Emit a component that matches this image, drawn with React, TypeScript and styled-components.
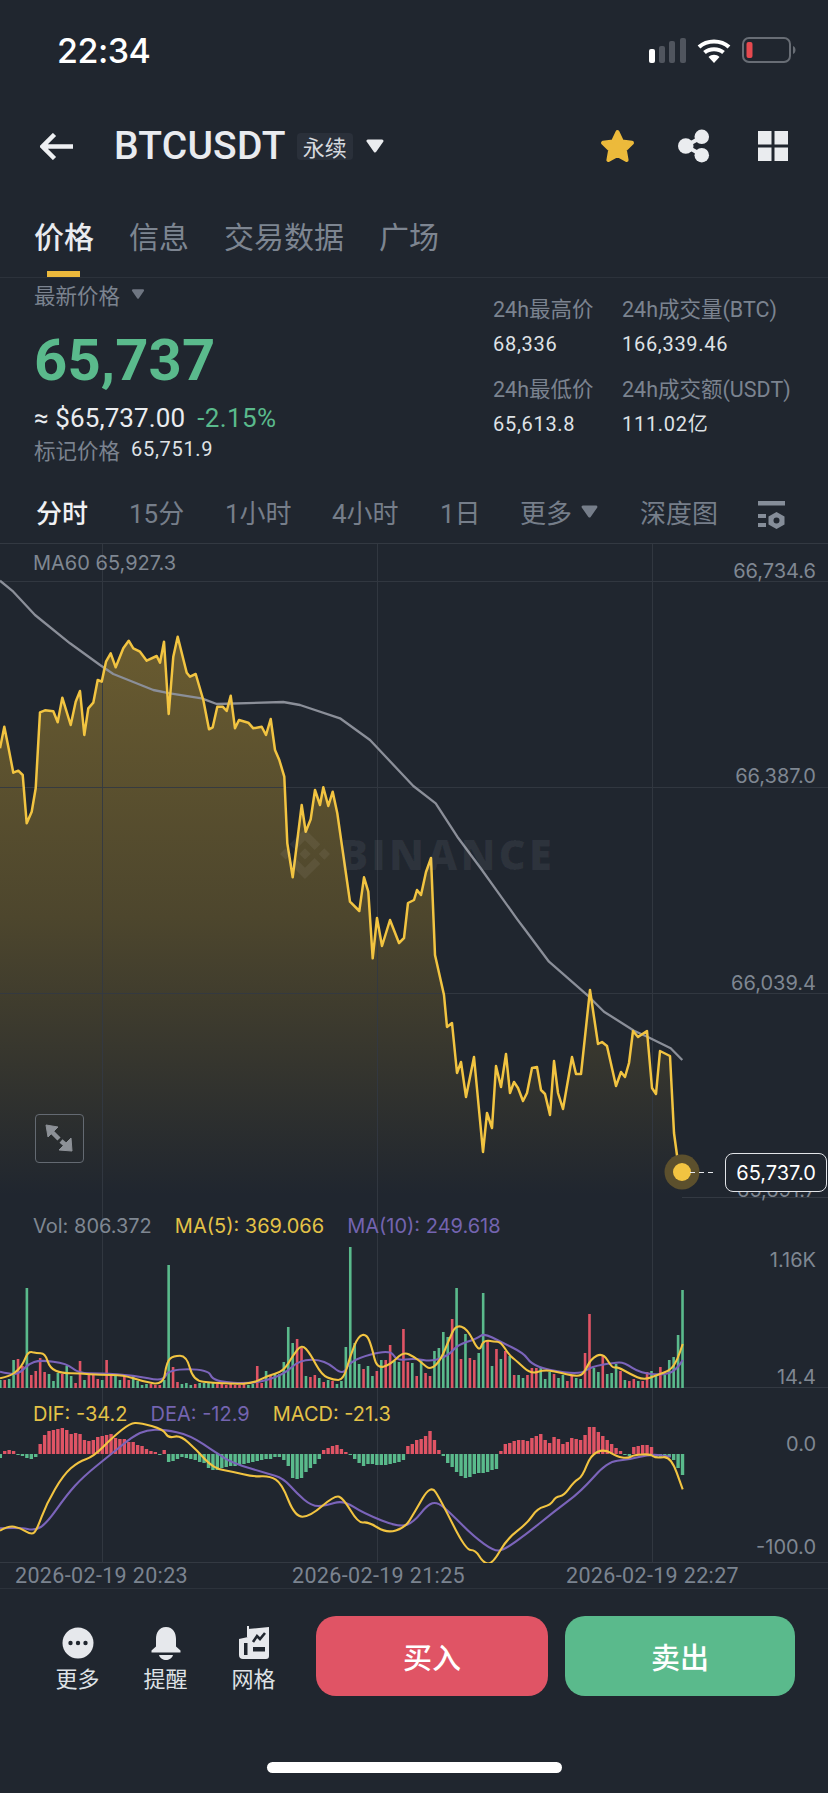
import React from 'react';
import styled, { createGlobalStyle } from 'styled-components';
import { SiBinance } from 'react-icons/si';

const BG = '#20262f';
const GRID = '#333942';
const GREEN = '#5aba8c';
const RED = '#e05465';
const YELLOW = '#f2c441';
const PURPLE = '#7b64ba';
const CJK = `Roboto, "Noto Sans CJK SC", sans-serif`;
const SANS = `Inter, "Liberation Sans", sans-serif`;

type Pt = [number, number];

// traced from crops at 3x, so each run is converted back to page pixels
const crop = (pts: number[][], ox: number, oy: number): Pt[] =>
  pts.map(([x, y]) => [x / 3 + ox, y / 3 + oy] as Pt);

const sharp = (pts: Pt[]) => 'M' + pts.map(([x, y]) => `${x.toFixed(1)} ${y.toFixed(1)}`).join('L');

const smooth = (pts: Pt[]) => {
  let d = `M${pts[0][0].toFixed(1)} ${pts[0][1].toFixed(1)}`;
  for (let i = 1; i < pts.length - 1; i++) {
    const mx = (pts[i][0] + pts[i + 1][0]) / 2;
    const my = (pts[i][1] + pts[i + 1][1]) / 2;
    d += `Q${pts[i][0].toFixed(1)} ${pts[i][1].toFixed(1)} ${mx.toFixed(1)} ${my.toFixed(1)}`;
  }
  const last = pts[pts.length - 1];
  return d + `L${last[0].toFixed(1)} ${last[1].toFixed(1)}`;
};

const PRICE: Pt[] = [
  ...crop(
    [[0,595],[13,530],[25,590],[40,668],[55,662],[68,675],[80,820],[95,785],[107,715],[120,487],[135,481],[160,484],[173,517],[187,443],[212,525],[227,455],[240,423],[253,555],[265,475],[280,458],[293,390],[305,395],[318,335],[332,310],[347,352],[370,295],[386,272],[400,295],[420,305],[440,332],[470,318],[480,338],[492,275],[506,492],[520,320],[533,260],[560,368],[570,380],[587,372],[610,450],[627,538],[638,532],[652,470],[668,470],[680,483],[692,437],[705,535],[717,510],[745,518],[760,535],[785,530],[798,555],[812,507],[825,600],[838,630],[853,680],[862,880],[878,982],[905,765],[917,845],[932,808],[945,720],[960,765],[970,712],[985,768],[998,725],[1012,790],[1050,1055],[1078,1083],[1092,982],[1105,1025],[1118,1225]],
    0,
    550
  ),
  [377,918],[382,946],[390,920],[399,943],[404,938],[408,903],[414,900],[417,890],[421,895],[426,872],[431,858],[435,955],[444,995],[447,1027],[452,1023],[457,1073],[461,1062],[466,1097],[474,1057],[483,1152],[487,1113],[492,1128],[496,1066],[501,1087],[506,1054],[510,1093],[514,1082],[518,1088],[523,1101],[527,1093],[532,1068],[537,1067],[541,1090],[545,1094],[550,1115],[554,1061],[558,1093],[563,1109],[572,1057],[576,1074],[581,1074],[590,990],[598,1044],[602,1042],[607,1046],[616,1086],[621,1072],[625,1077],[629,1063],[633,1031],[638,1037],[647,1031],[652,1088],[656,1094],[660,1051],[670,1056],[674,1133],[679,1170],[682,1172],
];

const MA60: Pt[] = [
  ...crop([[0,92],[40,125],[105,195],[210,280],[300,345],[340,372],[460,420],[510,430],[605,445],[650,462],[850,456],[900,465],[1020,505],[1110,570],[1240,708]], 0, 550),
  ...crop([[65,760],[130,860],[200,955],[310,1108]], 414, 550),
  ...crop([[330,85],[405,185],[525,290],[570,335],[660,392],[700,410],[770,445],[805,480]], 414, 900),
];

// positive = green, negative = red
const VOLUME = [
  8,-8,9,28,-29,-22,100,-13,-17,-30,-16,14,7,15,-14,22,12,-5,-27,8,-14,-15,-9,8,-28,-14,12,8,-13,-8,13,7,3,4,-4,-3,-3,8,123,-21,-6,4,5,3,-4,5,5,5,6,-4,-4,-3,-4,-3,-3,-4,3,4,-22,-5,17,-12,14,14,26,61,45,-49,-40,12,-11,-13,10,-6,8,-7,4,7,41,141,45,24,-19,22,12,-17,28,-28,-43,27,26,-59,-26,25,-12,28,-15,-12,37,40,56,51,-69,100,-29,54,-30,-28,35,95,-48,22,-39,29,-37,32,-13,13,10,-13,-20,-20,20,9,16,-14,10,13,-7,-12,10,9,-35,-74,20,16,-33,14,15,24,-17,8,-7,-9,7,-7,-16,17,13,-21,13,28,31,53,98,
];

// positive = red (above zero), negative = green
const MACD = [
  -4,3,4,3,-1,-2,-4,-5,-3,10,19,23,24,25,26,24,20,21,20,14,13,14,17,18,19,20,16,15,15,12,12,9,8,5,3,2,-1,4,-8,-7,-5,-3,-4,-5,-6,-8,-9,-14,-16,-16,-14,-13,-12,-12,-11,-10,-9,-8,-7,-6,-5,-5,-3,-3,-6,-12,-24,-25,-24,-18,-14,-10,-5,4,6,8,9,5,2,-1,-5,-9,-12,-10,-10,-11,-11,-11,-10,-9,-8,-6,8,10,14,15,18,23,14,4,-2,-9,-13,-18,-22,-24,-23,-20,-19,-19,-18,-16,-15,3,10,11,13,14,14,13,16,18,20,14,11,17,15,10,12,16,15,14,19,27,27,22,18,14,10,6,3,-1,-2,7,8,9,9,7,-3,-3,-3,-3,-6,-14,-21,
];

const barX = (i: number) => i * 4.43 + 0.3;

const VOL_MA5: Pt[] = [
  ...crop([[0,565],[30,558],[55,540],[70,520],[85,483],[110,490],[135,490],[150,535],[185,550],[240,550],[300,555],[370,555],[430,575],[490,585],[500,515],[520,497],[560,497],[580,572],[640,578],[700,582],[760,580],[800,558],[850,545],[880,495],[905,463],[930,490],[965,555],[1000,570],[1030,570],[1050,500],[1075,437],[1100,433],[1115,470],[1130,535],[1170,525],[1210,485],[1242,500]], 0, 1190),
  ...crop([[25,520],[50,540],[80,510],[105,450],[125,405],[160,415],[195,488],[208,450],[240,455],[260,455],[285,495],[310,515],[350,552],[390,540],[425,545],[490,560],[510,550],[530,507],[567,488],[595,535],[610,530],[650,553],[690,570],[730,555],[770,540],[790,510],[806,462]], 414, 1190),
];

const VOL_MA10: Pt[] = [
  ...crop([[0,545],[40,555],[65,545],[85,522],[120,510],[200,520],[235,550],[300,550],[400,555],[490,575],[505,538],[625,538],[640,575],[760,582],[850,555],[900,508],[975,510],[1030,558],[1050,510],[1170,478],[1190,512],[1242,505]], 0, 1190),
  ...crop([[55,515],[105,495],[130,465],[190,445],[210,430],[260,455],[330,490],[350,520],[400,540],[500,553],[530,530],[600,518],[630,517],[680,550],[760,555],[790,535],[806,510]], 414, 1190),
];

const DIF: Pt[] = [
  ...crop([[0,452],[25,437],[60,443],[95,465],[110,450],[140,370],[190,285],[235,245],[280,230],[340,170],[390,130],[420,128],[490,148],[505,175],[540,165],[590,210],[640,265],[700,275],[760,290],[810,288],[845,310],[885,410],[930,410],[1005,345],[1030,355],[1075,430],[1105,425],[1160,460],[1215,443],[1242,400]], 0, 1380),
  ...crop([[50,313],[80,360],[155,510],[185,510],[207,548],[235,553],[280,475],[340,430],[370,385],[410,375],[425,350],[450,347],[480,305],[505,290],[530,225],[570,207],[610,230],[640,235],[660,225],[710,222],[725,235],[770,228],[806,328]], 414, 1380),
];

const DEA: Pt[] = [
  ...crop([[0,445],[60,442],[105,452],[140,430],[200,345],[250,290],[330,225],[400,168],[440,150],[490,148],[570,165],[650,220],[700,250],[800,280],[850,295],[890,340],[935,378],[975,378],[1030,360],[1090,400],[1200,443],[1242,425]], 0, 1380),
  ...crop([[40,375],[70,365],[110,400],[180,470],[240,513],[270,510],[340,460],[420,395],[500,335],[580,245],[640,240],[710,222],[770,230]], 414, 1380),
];

const GlobalStyle = createGlobalStyle`
  html, body {
    margin: 0;
    padding: 0;
    background: ${BG};
  }
`;

const Page = styled.div`
  width: 828px;
  height: 1793px;
  background: ${BG};
  color: #eaecef;
  font-family: ${CJK};
  overflow: hidden;
  display: flex;
  flex-direction: column;
`;

const StatusBar = styled.div`
  height: 100px;
  display: flex;
  align-items: center;
  justify-content: space-between;
  padding: 0 32px 0 57px;
  box-sizing: border-box;
`;

const Clock = styled.div`
  font-family: ${SANS};
  font-size: 34px;
  font-weight: 500;
  color: #fff;
  letter-spacing: -0.5px;
`;

const StatusIcons = styled.div`
  display: flex;
  align-items: center;
  gap: 11px;
`;

const Header = styled.div`
  height: 92px;
  display: flex;
  align-items: center;
  padding: 0 40px;
  box-sizing: border-box;
`;

const Symbol = styled.div`
  font-size: 39px;
  font-weight: 500;
  margin-left: 41px;
  color: #e9ebef;
  letter-spacing: 0.2px;
`;

const Badge = styled.div`
  width: 56px;
  height: 27px;
  margin-left: 11px;
  border-radius: 4px;
  background: #2a303a;
  color: #d6d9de;
  font-size: 22px;
  display: flex;
  align-items: center;
  justify-content: center;
`;

const CaretSlot = styled.span`
  margin-left: 13px;
`;

const HeaderActions = styled.div`
  margin-left: auto;
  display: flex;
  align-items: center;
  gap: 43px;
  & > svg:last-child {
    margin-left: 5px;
  }
`;

const TabBar = styled.div`
  height: 86px;
  display: flex;
  padding-left: 34px;
  gap: 35px;
  border-bottom: 1px solid #2c323b;
  box-sizing: border-box;
`;

const Tab = styled.div<{ $active?: boolean }>`
  position: relative;
  font-size: 30px;
  line-height: 30px;
  padding-top: 31px;
  font-weight: ${(p) => (p.$active ? 500 : 400)};
  color: ${(p) => (p.$active ? '#e9ebef' : '#7d8591')};
`;

const TabMark = styled.div`
  position: absolute;
  left: 13px;
  bottom: 0;
  width: 33px;
  height: 6px;
  background: #edb93c;
`;

const Stats = styled.div`
  height: 202px;
  display: flex;
  padding-left: 34px;
  box-sizing: border-box;
`;

const PriceColumn = styled.div`
  width: 459px;
`;

const Muted = styled.span`
  color: #7b838f;
  font-size: 21.5px;
`;

const LastPriceLabel = styled.div`
  display: flex;
  align-items: center;
  gap: 11px;
  height: 32px;
`;

const BigPrice = styled.div`
  font-size: 58px;
  font-weight: 700;
  line-height: 60px;
  margin-top: 20px;
  color: ${GREEN};
  letter-spacing: 0.1px;
`;

const FiatRow = styled.div`
  display: flex;
  align-items: baseline;
  gap: 12px;
  margin-top: 12px;
  font-size: 26px;
  line-height: 32px;
  letter-spacing: 0.1px;
  color: #eaecef;
`;

const Change = styled.span`
  color: ${GREEN};
  letter-spacing: 0.4px;
`;

const MarkRow = styled.div`
  display: flex;
  align-items: center;
  gap: 11px;
  height: 30px;
`;

const SmallValue = styled.span`
  font-size: 20px;
  color: #dfe2e6;
  letter-spacing: 0.7px;
`;

const MarketGrid = styled.div`
  display: grid;
  grid-template-columns: 129px auto;
  grid-template-rows: 35px 45px 35px 45px;
  padding-top: 14px;
  align-content: start;
`;

const MarketCell = styled.div`
  line-height: 35px;
  white-space: nowrap;
`;

const IntervalBar = styled.div`
  height: 64px;
  display: flex;
  align-items: center;
  padding-left: 36px;
  position: relative;
  border-bottom: 1px solid ${GRID};
  box-sizing: border-box;
`;

const Interval = styled.div<{ $active?: boolean; $w: number }>`
  width: ${(p) => p.$w}px;
  flex: none;
  font-size: 26px;
  display: flex;
  align-items: center;
  gap: 9px;
  font-weight: ${(p) => (p.$active ? 500 : 400)};
  color: ${(p) => (p.$active ? '#f0f1f3' : '#767e8a')};
`;

const ChartPanel = styled.div<{ $h: number }>`
  position: relative;
  height: ${(p) => p.$h}px;
  border-bottom: 1px solid ${GRID};
  box-sizing: border-box;
  font-family: ${SANS};
  font-size: 20px;
  svg.plot {
    display: block;
    position: absolute;
    inset: 0;
  }
`;

const Legend = styled.div<{ $top: number }>`
  position: absolute;
  left: 33px;
  top: ${(p) => p.$top}px;
  display: flex;
  gap: 23px;
  line-height: 22px;
  white-space: nowrap;
`;

const LegendItem = styled.span<{ $color: string }>`
  color: ${(p) => p.$color};
`;

const AxisLabel = styled.div<{ $top: number }>`
  position: absolute;
  right: 12px;
  top: ${(p) => p.$top}px;
  line-height: 22px;
  color: #7f8792;
`;

const Watermark = styled.div`
  position: absolute;
  left: 280px;
  top: 281px;
  display: flex;
  align-items: center;
  gap: 10px;
  font-family: "Open Sans", ${SANS};
  font-size: 42px;
  font-weight: 800;
  letter-spacing: 3px;
  color: rgba(255, 255, 255, 0.06);
`;

const ExpandButton = styled.div`
  position: absolute;
  left: 35px;
  top: 570px;
  width: 49px;
  height: 49px;
  box-sizing: border-box;
  border: 1.5px solid #646a72;
  border-radius: 4px;
`;

const PriceTag = styled.div`
  position: absolute;
  left: 725px;
  top: 609px;
  width: 102px;
  height: 39px;
  box-sizing: border-box;
  border: 1.5px solid #e2e4e8;
  border-radius: 8px;
  background: ${BG};
  color: #fff;
  font-size: 20px;
  display: flex;
  align-items: center;
  justify-content: center;
`;

const TimeAxis = styled.div`
  height: 26px;
  position: relative;
  border-bottom: 1px solid #2c323b;
  box-sizing: border-box;
  font-family: ${CJK};
  font-size: 21.5px;
  color: #7b838f;
  display: flex;
  align-items: center;
  padding-left: 15px;
`;

const TimeLabel = styled.span<{ $w: number }>`
  width: ${(p) => p.$w}px;
  flex: none;
  letter-spacing: 0.35px;
`;

const BottomBar = styled.div`
  height: 109px;
  padding-top: 27px;
  display: flex;
  box-sizing: border-box;
`;

const ToolGroup = styled.div`
  width: 316px;
  display: flex;
  padding-left: 34px;
  padding-top: 10px;
  box-sizing: border-box;
`;

const Tool = styled.div`
  width: 89px;
  margin-left: -1px;
  display: flex;
  flex-direction: column;
  align-items: center;
  gap: 8px;
  font-size: 22px;
  line-height: 24px;
  white-space: nowrap;
  color: #dfe2e6;
  svg {
    display: block;
  }
`;

const TradeButton = styled.div<{ $color: string; $w: number }>`
  width: ${(p) => p.$w}px;
  height: 80px;
  margin-right: 17px;
  background: ${(p) => p.$color};
  border-radius: 20px;
  color: #fff;
  font-size: 29px;
  font-weight: 500;
  display: flex;
  align-items: center;
  justify-content: center;
`;

const HomeRow = styled.div`
  flex: 1;
  display: flex;
  justify-content: center;
  padding-top: 64px;
  box-sizing: border-box;
`;

const HomeIndicator = styled.div`
  width: 295px;
  height: 11px;
  border-radius: 6px;
  background: #fff;
`;

const Caret: React.FC<{ color: string; w: number; h: number }> = ({ color, w, h }) => (
  <svg width={w} height={h} viewBox="0 0 18 14" style={{ display: 'block', flex: 'none' }}>
    <path d="M2 2H16L9 12Z" fill={color} stroke={color} strokeWidth="3" strokeLinejoin="round" />
  </svg>
);

const SignalIcon = () => (
  <svg width="37" height="25" viewBox="0 0 37 25">
    <rect x="0" y="11" width="6" height="14" rx="2" fill="#fff" />
    <rect x="10" y="8" width="6" height="17" rx="2" fill="#50555e" />
    <rect x="20" y="3" width="6" height="22" rx="2" fill="#50555e" />
    <rect x="31" y="0" width="6" height="25" rx="2" fill="#50555e" />
  </svg>
);

const WifiIcon = () => (
  <svg width="34" height="25" viewBox="0 0 34 25" fill="none" stroke="#fff" strokeLinecap="butt">
    <path d="M2 9C10 1.5 24 1.5 32 9" strokeWidth="4" />
    <path d="M7.5 14.5C12.5 10 21.5 10 26.5 14.5" strokeWidth="4" />
    <path d="M17 25L11.5 19C14.5 16 19.5 16 22.5 19Z" fill="#fff" stroke="none" />
  </svg>
);

const BatteryIcon = () => (
  <svg width="54" height="26" viewBox="0 0 54 26">
    <rect x="1" y="1" width="47" height="24" rx="6" fill="none" stroke="#686d75" strokeWidth="2" />
    <rect x="4.5" y="5" width="6" height="16" rx="2" fill="#e5494f" />
    <path d="M51 9C53 10 53.5 11.5 53.5 13S53 16 51 17Z" fill="#686d75" />
  </svg>
);

const BackIcon = () => (
  <svg width="33" height="27" viewBox="0 0 33 27" fill="none" stroke="#eef0f3" strokeWidth="4.5">
    <path d="M33 13.5H3M14.5 1.5L2.5 13.5L14.5 25.5" />
  </svg>
);

const StarIcon = () => (
  <svg width="35" height="34" viewBox="0 0 35 34">
    <path
      d="M17.5 3L22 12.5L32 13.8L24.8 20.8L26.6 31L17.5 26L8.4 31L10.2 20.8L3 13.8L13 12.5Z"
      fill="#ecba3b"
      stroke="#ecba3b"
      strokeWidth="4"
      strokeLinejoin="round"
    />
  </svg>
);

const ShareIcon = () => (
  <svg width="32" height="34" viewBox="0 0 33 34" fill="#eaecef">
    <path d="M24 8L8 17L24 26" fill="none" stroke="#eaecef" strokeWidth="4" />
    <circle cx="24.5" cy="7.5" r="7.5" />
    <circle cx="8" cy="17" r="8" />
    <circle cx="24.5" cy="26.5" r="7.5" />
  </svg>
);

const GridIcon = () => (
  <svg width="30" height="30" viewBox="0 0 30 30" fill="#eaecef">
    <rect x="0" y="0" width="13.5" height="13.5" />
    <rect x="16.5" y="0" width="13.5" height="13.5" />
    <rect x="0" y="16.5" width="13.5" height="13.5" />
    <rect x="16.5" y="16.5" width="13.5" height="13.5" />
  </svg>
);

const DepthSettingsIcon = () => (
  <svg width="28" height="28" viewBox="0 0 28 28" fill="#858d99" style={{ position: 'absolute', left: 758, top: 21 }}>
    <rect x="0" y="0" width="27" height="4.5" />
    <rect x="0" y="13" width="8" height="4" />
    <rect x="0" y="22" width="8" height="4" />
    <path
      fillRule="evenodd"
      d="M18.5 11L26.5 15.5V23.5L18.5 28L10.5 23.5V15.5ZM18.5 16.5A3 3 0 1 0 18.5 22.5A3 3 0 1 0 18.5 16.5Z"
    />
  </svg>
);

const ExpandIcon = () => (
  <svg width="46" height="46" viewBox="0 0 46 46" fill="#8d9197" stroke="#8d9197">
    <path d="M10 10L22 12L12 22Z" strokeWidth="1" />
    <path d="M14 15L23 24" strokeWidth="4.5" fill="none" />
    <path d="M36 36L23 35L35 23Z" strokeWidth="1" />
    <path d="M25 26L32 32" strokeWidth="4.5" fill="none" />
  </svg>
);

const MoreIcon = () => (
  <svg width="32" height="34" viewBox="0 0 32 34">
    <circle cx="16" cy="17" r="15.5" fill="#e6e8ec" />
    <circle cx="8.5" cy="17" r="2.2" fill="#20262f" />
    <circle cx="16" cy="17" r="2.2" fill="#20262f" />
    <circle cx="23.5" cy="17" r="2.2" fill="#20262f" />
  </svg>
);

const BellIcon = () => (
  <svg width="32" height="34" viewBox="0 0 32 34" fill="#e6e8ec">
    <path d="M16 1C23 1 26 7 26 13V20.5L30.5 24.5V26.5H1.5V24.5L6 20.5V13C6 7 9 1 16 1Z" />
    <path d="M9 29H23C22 32.5 19 34 16 34S10 32.5 9 29Z" />
  </svg>
);

const BotIcon = () => (
  <svg width="32" height="34" viewBox="0 0 32 34">
    <path d="M10 3L31 1V30C31 32 30 33 28 33H5C2.5 33 1 31.5 1 29V13L10 11Z" fill="#e6e8ec" />
    <path d="M11 0L9 0V11L11 11Z" fill="#e6e8ec" />
    <path d="M15 16L19 10L22 13L27 7" fill="none" stroke="#20262f" strokeWidth="2.6" />
    <rect x="15" y="21" width="12" height="4.5" fill="#20262f" />
    <rect x="6" y="17" width="3.5" height="12" fill="#20262f" />
  </svg>
);

const GridLines: React.FC<{ y0: number; y1: number; rows?: number[] }> = ({ y0, y1, rows = [] }) => (
  <g stroke={GRID} strokeWidth="1" opacity="0.9">
    {[102.5, 377.5, 652.5].map((x) => (
      <line key={x} x1={x} x2={x} y1={y0} y2={y1} />
    ))}
    {rows.map((y) => (
      <line key={y} x1="0" x2="828" y1={y} y2={y} />
    ))}
  </g>
);

const MainChart = () => {
  const line = sharp(PRICE);
  return (
    <ChartPanel $h={654}>
      <svg className="plot" width="828" height="654" viewBox="0 544 828 654">
        <defs>
          <linearGradient id="area" gradientUnits="userSpaceOnUse" x1="0" x2="0" y1="640" y2="1195">
            <stop offset="0" stopColor="#695b30" />
            <stop offset="0.5" stopColor="#4d462d" />
            <stop offset="1" stopColor={BG} />
          </linearGradient>
        </defs>
        <path d={`${line}L682 1198L0 1198Z`} fill="url(#area)" />
        <GridLines y0={544} y1={1198} rows={[581.5, 787.5, 993.5]} />
        <path d={sharp(MA60)} fill="none" stroke="#8b8f99" strokeWidth="2.3" strokeLinejoin="round" />
        <path d={line} fill="none" stroke={YELLOW} strokeWidth="2.5" strokeLinejoin="round" />
        <circle cx="682" cy="1172" r="17.5" fill="#5c502d" />
        <circle cx="682" cy="1172" r="9" fill={YELLOW} />
        <path d="M690 1172.5H716" stroke="#e6e8ec" strokeWidth="1.2" strokeDasharray="5 4" />
      </svg>
      <Watermark>
        <SiBinance size={50} />
        BINANCE
      </Watermark>
      <Legend $top={8}>
        <LegendItem $color="#7f8792">MA60 65,927.3</LegendItem>
      </Legend>
      <AxisLabel $top={16}>66,734.6</AxisLabel>
      <AxisLabel $top={221}>66,387.0</AxisLabel>
      <AxisLabel $top={428}>66,039.4</AxisLabel>
      <AxisLabel $top={635}>65,691.7</AxisLabel>
      <ExpandButton>
        <ExpandIcon />
      </ExpandButton>
      <PriceTag>65,737.0</PriceTag>
    </ChartPanel>
  );
};

const VolumeChart = () => (
  <ChartPanel $h={190}>
    <svg className="plot" width="828" height="190" viewBox="0 1198 828 190">
      <GridLines y0={1198} y1={1388} />
      {VOLUME.map((v, i) => (
        <rect key={i} x={barX(i) - 1.3} y={1388 - Math.abs(v)} width="2.6" height={Math.abs(v)} fill={v > 0 ? GREEN : RED} />
      ))}
      <path d={smooth(VOL_MA10)} fill="none" stroke={PURPLE} strokeWidth="2.1" />
      <path d={smooth(VOL_MA5)} fill="none" stroke={YELLOW} strokeWidth="2.1" />
    </svg>
    <Legend $top={17}>
      <LegendItem $color="#7f8792">Vol: 806.372</LegendItem>
      <LegendItem $color="#e3c247">MA(5): 369.066</LegendItem>
      <LegendItem $color="#7464b0">MA(10): 249.618</LegendItem>
    </Legend>
    <AxisLabel $top={51}>1.16K</AxisLabel>
    <AxisLabel $top={168}>14.4</AxisLabel>
  </ChartPanel>
);

const MacdChart = () => (
  <ChartPanel $h={175}>
    <svg className="plot" width="828" height="175" viewBox="0 1388 828 175">
      <GridLines y0={1388} y1={1563} />
      {MACD.map((v, i) => (
        <rect
          key={i}
          x={barX(i) - 1.7}
          y={v > 0 ? 1454 - v : 1454}
          width="3.4"
          height={Math.abs(v)}
          fill={v > 0 ? RED : GREEN}
        />
      ))}
      <path d={smooth(DEA)} fill="none" stroke={PURPLE} strokeWidth="2.1" />
      <path d={smooth(DIF)} fill="none" stroke={YELLOW} strokeWidth="2.1" />
    </svg>
    <Legend $top={15}>
      <LegendItem $color="#e3c247">DIF: -34.2</LegendItem>
      <LegendItem $color="#7464b0">DEA: -12.9</LegendItem>
      <LegendItem $color="#e3c247">MACD: -21.3</LegendItem>
    </Legend>
    <AxisLabel $top={45}>0.0</AxisLabel>
    <AxisLabel $top={148}>-100.0</AxisLabel>
  </ChartPanel>
);

const App: React.FC = () => (
  <Page>
    <GlobalStyle />
    <StatusBar>
      <Clock>22:34</Clock>
      <StatusIcons>
        <SignalIcon />
        <WifiIcon />
        <BatteryIcon />
      </StatusIcons>
    </StatusBar>

    <Header>
      <BackIcon />
      <Symbol>BTCUSDT</Symbol>
      <Badge>永续</Badge>
      <CaretSlot>
        <Caret color="#eaecef" w={18} h={14} />
      </CaretSlot>
      <HeaderActions>
        <StarIcon />
        <ShareIcon />
        <GridIcon />
      </HeaderActions>
    </Header>

    <TabBar>
      <Tab $active>
        价格
        <TabMark />
      </Tab>
      <Tab>信息</Tab>
      <Tab>交易数据</Tab>
      <Tab>广场</Tab>
    </TabBar>

    <Stats>
      <PriceColumn>
        <LastPriceLabel>
          <Muted>最新价格</Muted>
          <Caret color="#6f7682" w={14} h={10} />
        </LastPriceLabel>
        <BigPrice>65,737</BigPrice>
        <FiatRow>
          <span>≈ $65,737.00</span>
          <Change>-2.15%</Change>
        </FiatRow>
        <MarkRow>
          <Muted>标记价格</Muted>
          <SmallValue>65,751.9</SmallValue>
        </MarkRow>
      </PriceColumn>
      <MarketGrid>
        <MarketCell>
          <Muted>24h最高价</Muted>
        </MarketCell>
        <MarketCell>
          <Muted>24h成交量(BTC)</Muted>
        </MarketCell>
        <MarketCell>
          <SmallValue>68,336</SmallValue>
        </MarketCell>
        <MarketCell>
          <SmallValue>166,339.46</SmallValue>
        </MarketCell>
        <MarketCell>
          <Muted>24h最低价</Muted>
        </MarketCell>
        <MarketCell>
          <Muted>24h成交额(USDT)</Muted>
        </MarketCell>
        <MarketCell>
          <SmallValue>65,613.8</SmallValue>
        </MarketCell>
        <MarketCell>
          <SmallValue>111.02亿</SmallValue>
        </MarketCell>
      </MarketGrid>
    </Stats>

    <IntervalBar>
      <Interval $active $w={93}>分时</Interval>
      <Interval $w={96}>15分</Interval>
      <Interval $w={107}>1小时</Interval>
      <Interval $w={108}>4小时</Interval>
      <Interval $w={80}>1日</Interval>
      <Interval $w={120}>
        更多
        <Caret color="#767e8a" w={17} h={13} />
      </Interval>
      <Interval $w={100}>深度图</Interval>
      <DepthSettingsIcon />
    </IntervalBar>

    <MainChart />
    <VolumeChart />
    <MacdChart />

    <TimeAxis>
      <TimeLabel $w={277}>2026-02-19 20:23</TimeLabel>
      <TimeLabel $w={274}>2026-02-19 21:25</TimeLabel>
      <TimeLabel $w={180}>2026-02-19 22:27</TimeLabel>
    </TimeAxis>

    <BottomBar>
      <ToolGroup>
        <Tool>
          <MoreIcon />
          更多
        </Tool>
        <Tool>
          <BellIcon />
          提醒
        </Tool>
        <Tool>
          <BotIcon />
          网格
        </Tool>
      </ToolGroup>
      <TradeButton $color={RED} $w={232}>买入</TradeButton>
      <TradeButton $color={GREEN} $w={230}>卖出</TradeButton>
    </BottomBar>

    <HomeRow>
      <HomeIndicator />
    </HomeRow>
  </Page>
);

export default App;
